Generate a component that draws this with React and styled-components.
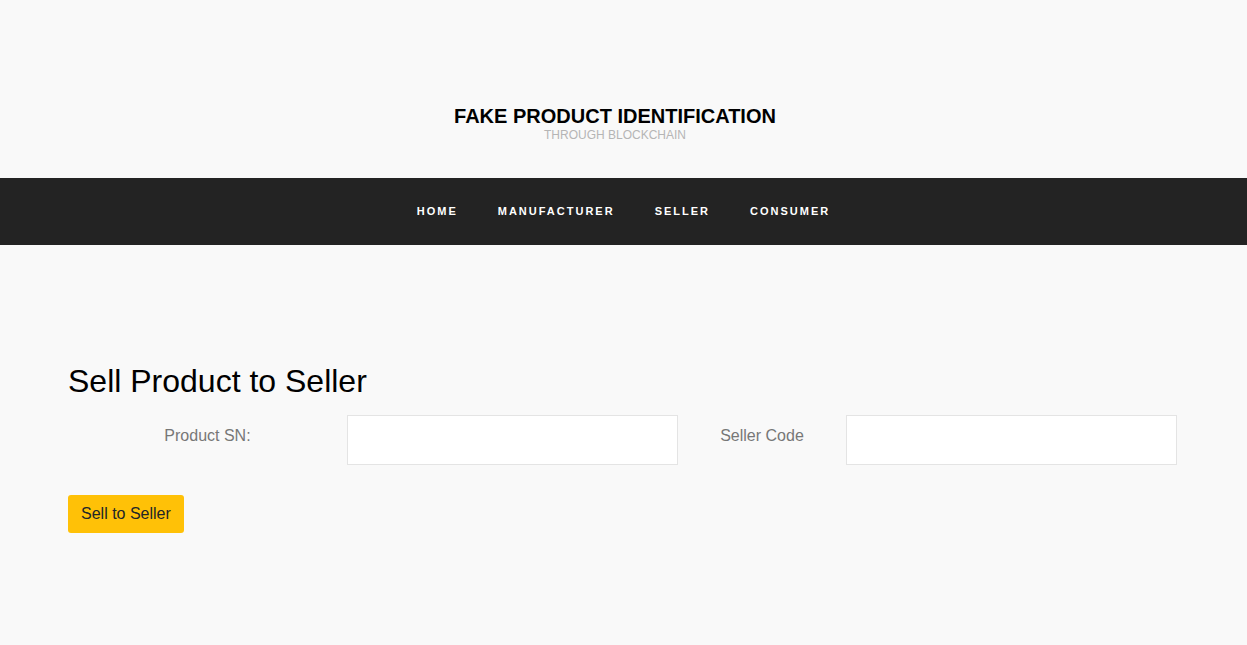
import React from "react";
import styled, { createGlobalStyle } from "styled-components";

const Global = createGlobalStyle`
  html, body { margin: 0; padding: 0; background: #f9f9f9; }
  body { font-family: "Liberation Sans", Arial, sans-serif; }
  * { box-sizing: border-box; }
`;

const Header = styled.header`
  display: flex;
  flex-direction: column;
  align-items: center;
  padding: 105px 17px 36px 0;
`;

const Title = styled.h1`
  margin: 0;
  font-size: 20px;
  font-weight: 700;
  line-height: 22px;
  color: #000;
  text-transform: uppercase;
`;

const Subtitle = styled.div`
  font-size: 12px;
  line-height: 14px;
  margin-top: 1px;
  color: #b5b5b5;
  text-transform: uppercase;
`;

const NavBar = styled.nav`
  background: #232323;
  height: 67px;
  padding-bottom: 1px;
  display: flex;
  justify-content: center;
  align-items: center;
`;

const NavLink = styled.a`
  color: #fff;
  font-size: 11px;
  font-weight: 700;
  letter-spacing: 2px;
  text-transform: uppercase;
  padding: 0 20px;
  text-decoration: none;
  line-height: 14px;
`;

const Container = styled.main`
  width: 1111px;
  margin: 0 auto;
  padding: 117px 0 0;
`;

const Heading = styled.h2`
  margin: 0 0 15px;
  font-size: 32px;
  font-weight: 400;
  line-height: 38px;
  color: #000;
`;

const FormRow = styled.div`
  display: flex;
  align-items: flex-start;
`;

const Label = styled.label`
  width: ${(p) => p.$w}px;
  text-align: center;
  font-size: 16px;
  color: #777;
  padding-top: 12px;
  line-height: 18px;
`;

const Input = styled.input`
  width: 331px;
  height: 50px;
  border: 1px solid #e4e4e4;
  background: #fff;
  outline: none;
  padding: 0 12px;
  font-size: 16px;
  font-family: inherit;
`;

const Button = styled.button`
  margin-top: 30px;
  background: #ffc107;
  border: none;
  border-radius: 3px;
  height: 38px;
  padding: 0 13px;
  font-family: inherit;
  font-size: 16px;
  color: #212529;
  cursor: pointer;
`;

export default function App() {
  return (
    <>
      <Global />
      <Header>
        <Title>Fake Product Identification</Title>
        <Subtitle>Through Blockchain</Subtitle>
      </Header>
      <NavBar>
        <NavLink href="#">Home</NavLink>
        <NavLink href="#">Manufacturer</NavLink>
        <NavLink href="#">Seller</NavLink>
        <NavLink href="#">Consumer</NavLink>
      </NavBar>
      <Container>
        <Heading>Sell Product to Seller</Heading>
        <FormRow>
          <Label $w={279}>Product SN:</Label>
          <Input type="text" />
          <Label $w={168}>Seller Code</Label>
          <Input type="text" />
        </FormRow>
        <Button>Sell to Seller</Button>
      </Container>
    </>
  );
}
